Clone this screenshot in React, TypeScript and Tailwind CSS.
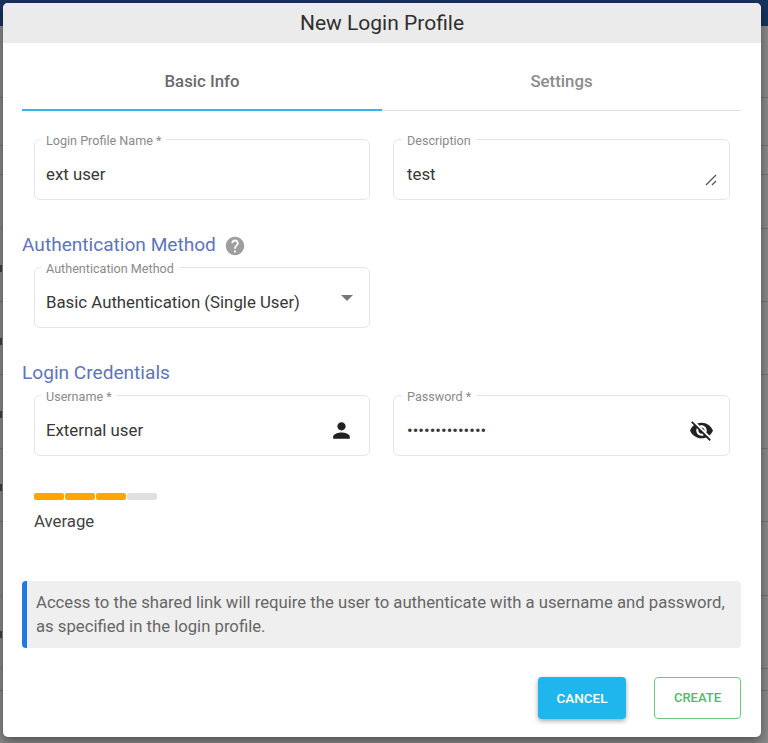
import type { ReactNode } from "react";

const Field = ({ label, children, right, second }: { label: string; children: ReactNode; right?: ReactNode; second?: boolean }) => (
  <fieldset className={`relative h-[67px] w-full min-w-0 rounded-md border border-[#e6e6e6] pr-[11px] ${second ? "pl-[13px]" : "pl-[11px]"}`}>
    <legend className="relative top-[2px] ml-[-5px] px-[5px] text-[12.6px] leading-[12px] text-[#8a8a8a]">{label}</legend>
    <div className="flex h-[54px] items-center justify-between pt-[5px] text-[16.8px] text-[#383838]">
      {children}
      {right}
    </div>
  </fieldset>
);

const ResizeHandle = () => (
  <svg width="12" height="12" viewBox="0 0 12 12" className="absolute bottom-[13px] right-[12px]" fill="none" stroke="#555" strokeWidth="1.2">
    <path d="M1 11 L11 1" />
    <path d="M7 11 L11 7" />
  </svg>
);

const Backdrop = () => (
  <div className="absolute inset-0 bg-[#8b8b8b]">
    <div className="h-[26px] bg-[#17345f]" />
    {[97, 145, 174, 228, 301, 374, 448, 521, 595, 668, 690].map((y) => (
      <div key={y} className="absolute left-0 right-0 h-px bg-[#757575]" style={{ top: y }} />
    ))}
    {[265, 338, 411, 484, 631].map((y) => (
      <div key={y} className="absolute left-0 h-[7px] w-[2px] bg-[#444]" style={{ top: y }} />
    ))}
  </div>
);

export default function App() {
  return (
    <div className="relative h-[743px] w-[768px] overflow-hidden font-['Roboto',sans-serif]">
      <Backdrop />
      <div className="relative ml-[3px] mt-[3px] h-[734px] w-[758px] overflow-hidden rounded-[5px] bg-white shadow-[0_4px_12px_rgba(0,0,0,0.45)]">
        <div className="flex h-[40px] items-center justify-center bg-[#ebebeb] pt-[1px] text-[21px] text-[#2f2f2f]">New Login Profile</div>

        <div className="pl-[19px] pr-[20px]">
          <div className="flex h-[68px] border-b border-[#e2e2e2] text-[16.8px] font-medium">
            <div className="-mb-px flex w-[360px] items-center justify-center border-b-2 border-[#35b6ee] pt-[11px] text-[#6b6b6b]">Basic Info</div>
            <div className="flex flex-1 items-center justify-center pt-[10px] text-[#8c8c8c]">Settings</div>
          </div>

          <div className="mt-[22px] grid grid-cols-[336px_337px] gap-x-[23px] pl-[12px]">
            <Field label="Login Profile Name *">ext user</Field>
            <Field label="Description" second>
              test
              <ResizeHandle />
            </Field>
          </div>

          <div className="mt-[32px] flex h-[26px] items-center gap-[8px] text-[19.1px] text-[#5f75b9]">
            Authentication Method
            <svg width="22" height="22" viewBox="0 0 24 24" fill="#9e9e9e" className="mt-[1px]">
              <path d="M12 2C6.48 2 2 6.48 2 12s4.48 10 10 10 10-4.48 10-10S17.52 2 12 2zm1 17h-2v-2h2v2zm2.07-7.75l-.9.92C13.45 12.9 13 13.5 13 15h-2v-.5c0-1.1.45-2.1 1.17-2.83l1.24-1.26c.37-.36.59-.86.59-1.41 0-1.1-.9-2-2-2s-2 .9-2 2H8c0-2.21 1.79-4 4-4s4 1.79 4 4c0 .88-.36 1.68-.93 2.25z" />
            </svg>
          </div>

          <div className="mt-[3px] w-[348px] pl-[12px]">
            <Field
              label="Authentication Method"
              right={
                <svg width="12" height="6" viewBox="0 0 12 6" className="mb-[10px] mr-[5px]">
                  <path d="M0 0 H12 L6 6 Z" fill="#777" />
                </svg>
              }
            >
              Basic Authentication (Single User)
            </Field>
          </div>

          <div className="mt-[32px] h-[26px] text-[19.1px] leading-[26px] text-[#5f75b9]">Login Credentials</div>

          <div className="mt-[3px] grid grid-cols-[336px_337px] gap-x-[23px] pl-[12px]">
            <Field
              label="Username *"
              right={
                <svg width="25" height="25" viewBox="0 0 24 24" fill="#222" className="mr-[4px]">
                  <path d="M12 12c2.21 0 4-1.79 4-4s-1.79-4-4-4-4 1.79-4 4 1.79 4 4 4zm0 2c-2.67 0-8 1.34-8 4v2h16v-2c0-2.66-5.33-4-8-4z" />
                </svg>
              }
            >
              External user
            </Field>
            <Field
              label="Password *"
              second
              right={
                <svg width="25" height="25" viewBox="0 0 24 24" fill="#222" className="mr-[4px]">
                  <path d="M12 7c2.76 0 5 2.24 5 5 0 .65-.13 1.26-.36 1.83l2.92 2.92c1.51-1.26 2.7-2.89 3.43-4.75-1.73-4.39-6-7.5-11-7.5-1.4 0-2.74.25-3.98.7l2.16 2.16C10.74 7.13 11.35 7 12 7zM2 4.27l2.28 2.28.46.46C3.08 8.3 1.78 10.02 1 12c1.73 4.39 6 7.5 11 7.5 1.55 0 3.03-.3 4.38-.84l.42.42L19.73 22 21 20.73 3.27 3 2 4.27zM7.53 9.8l1.55 1.55c-.05.21-.08.43-.08.65 0 1.66 1.34 3 3 3 .22 0 .44-.03.65-.08l1.55 1.55c-.67.33-1.41.53-2.2.53-2.76 0-5-2.24-5-5 0-.79.2-1.53.53-2.2zm4.31-.78l3.15 3.15.02-.16c0-1.66-1.34-3-3-3l-.17.01z" />
                </svg>
              }
            >
              <span className="text-[16.8px]">••••••••••••••</span>
            </Field>
          </div>

          <div className="mt-[37px] flex gap-px pl-[12px]">
            {["bg-[#ffa600]", "bg-[#ffa600]", "bg-[#ffa600]", "bg-[#e0e0e0]"].map((color, i) => (
              <div key={i} className={`h-[7px] w-[30px] rounded-[2px] ${color}`} />
            ))}
          </div>
          <div className="mt-[9px] pl-[12px] text-[16.8px] leading-[24px] text-[#444]">Average</div>

          <div className="mt-[48px] h-[67px] rounded-[4px] border-l-[5px] border-[#1e7ae0] bg-[#efefef] px-[9px] pt-[10px] text-[16.7px] leading-[24px] text-[#666]">
            Access to the shared link will require the user to authenticate with a username and password, as specified in the login profile.
          </div>

          <div className="mt-[29px] flex justify-end gap-[28px] font-medium">
            <button className="h-[42px] w-[88px] rounded-[4px] bg-[#1fb6ee] text-[13.5px] text-white shadow-[0_2px_5px_rgba(0,0,0,0.35)]">CANCEL</button>
            <button className="h-[42px] w-[87px] rounded-[4px] border border-[#6cc983] text-[13px] text-[#4cbb6a]">CREATE</button>
          </div>
        </div>
      </div>
    </div>
  );
}
